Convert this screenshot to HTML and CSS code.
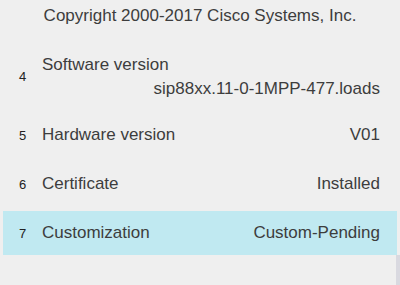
FILE: index.html
```
<!DOCTYPE html>
<html lang="en">
<head>
    <meta charset="UTF-8">
    <link rel="stylesheet" href="styles.css">
    <title>Status</title>
</head>
<body>
    <div class="screen">
        <p class="copyright">Copyright 2000-2017 Cisco Systems, Inc.</p>
        <ul class="list">
            <li class="row row_tall">
                <span class="num">4</span>
                <div class="stack">
                    <span class="label">Software version</span>
                    <span class="value">sip88xx.11-0-1MPP-477.loads</span>
                </div>
            </li>
            <li class="row">
                <span class="num">5</span>
                <span class="label">Hardware version</span>
                <span class="value">V01</span>
            </li>
            <li class="row">
                <span class="num">6</span>
                <span class="label">Certificate</span>
                <span class="value">Installed</span>
            </li>
            <li class="row selected">
                <span class="num">7</span>
                <span class="label">Customization</span>
                <span class="value">Custom-Pending</span>
            </li>
        </ul>
        <div class="scrollbar"></div>
    </div>
</body>
</html>
```

FILE: styles.css
```
body {
    margin: 0;
    padding: 0;
    background: #efefef;
    font-family: "Liberation Sans", Arial, sans-serif;
    color: #3d3d3d;
}
.screen {
    position: relative;
    width: 400px;
    height: 285px;
    overflow: hidden;
}
.copyright {
    margin: 0;
    padding-top: 6px;
    height: 38px;
    text-align: center;
    font-size: 17px;
}
.list {
    list-style: none;
    margin: 0;
    padding: 0 3px;
    display: flex;
    flex-direction: column;
    gap: 5px;
}
.row {
    display: flex;
    align-items: center;
    height: 44px;
    padding: 0 17px 0 16px;
    font-size: 17px;
}
.row_tall {
    height: 64px;
}
.row .num {
    width: 23px;
    font-size: 13px;
    color: #222;
}
.row .value {
    margin-left: auto;
}
.stack {
    flex: 1;
    display: flex;
    flex-direction: column;
    gap: 4px;
    padding-top: 2px;
}
.stack .value {
    text-align: right;
}
.selected {
    background: #c0e9f1;
}
.scrollbar {
    position: absolute;
    right: 0;
    top: 255px;
    width: 4px;
    height: 30px;
    background: #d9d9e0;
}
```
